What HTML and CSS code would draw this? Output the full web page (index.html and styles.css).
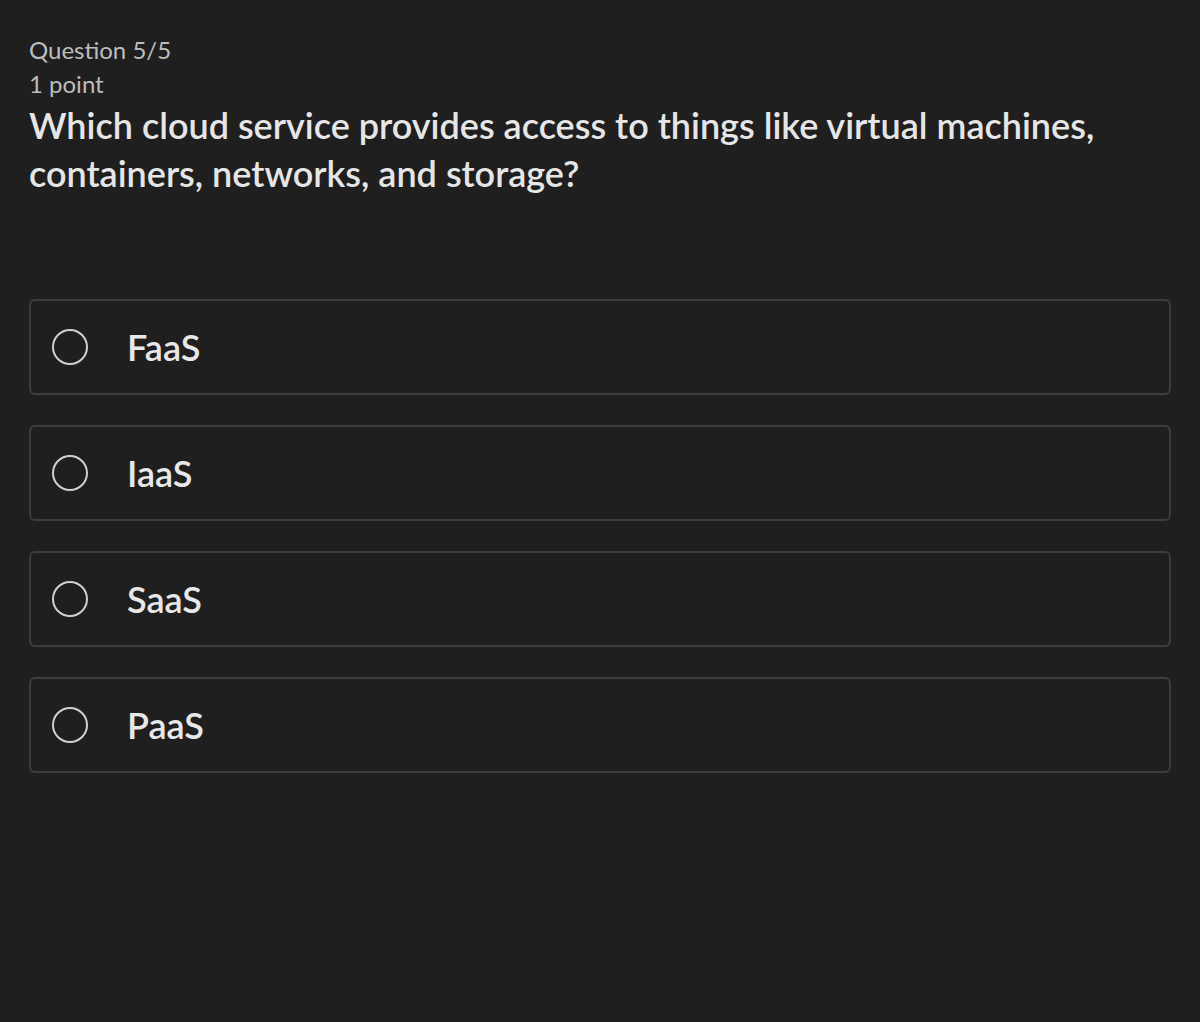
FILE: index.html
```html
<!DOCTYPE html>
<html lang="en">
<head>
    <meta charset="UTF-8">
    <meta name="viewport" content="width=device-width, initial-scale=1.0">
    <title>Question 5/5</title>
    <link rel="stylesheet" href="styles.css">
</head>
<body>
    <div class="quiz">
        <div class="meta">
            <div>Question 5/5</div>
            <div>1 point</div>
        </div>
        <h1 class="prompt">Which cloud service provides access to things like virtual machines, containers, networks, and storage?</h1>

        <div class="options">
            <label class="option">
                <span class="radio"></span>
                <span class="option-text">FaaS</span>
            </label>
            <label class="option">
                <span class="radio"></span>
                <span class="option-text">IaaS</span>
            </label>
            <label class="option">
                <span class="radio"></span>
                <span class="option-text">SaaS</span>
            </label>
            <label class="option">
                <span class="radio"></span>
                <span class="option-text">PaaS</span>
            </label>
        </div>
    </div>
</body>
</html>
```

FILE: styles.css
```css
html, body {
    height: 100%;
    margin: 0;
}

body {
    background-color: #1f1f1f;
    font-family: Lato, 'Noto Sans', sans-serif;
    color: #e6e6e6;
}

.quiz {
    padding: 33px 29px 0 29px;
}

.meta {
    font-size: 24px;
    line-height: 34px;
    color: #bdbdbd;
}

.prompt {
    margin: 0;
    font-size: 36px;
    line-height: 48px;
    font-weight: 600;
    color: #e6e6e6;
}

.options {
    display: flex;
    flex-direction: column;
    gap: 30px;
    margin-top: 102px;
}

.option {
    display: flex;
    align-items: center;
    height: 96px;
    box-sizing: border-box;
    border: 2px solid #3c3c3c;
    border-radius: 6px;
    padding-left: 21px;
}

.radio {
    width: 36px;
    height: 36px;
    box-sizing: border-box;
    border: 2px solid #d0d0d0;
    border-radius: 50%;
    flex-shrink: 0;
}

.option-text {
    margin-left: 39px;
    font-size: 36px;
    font-weight: 600;
    color: #e8e8e8;
}
```
